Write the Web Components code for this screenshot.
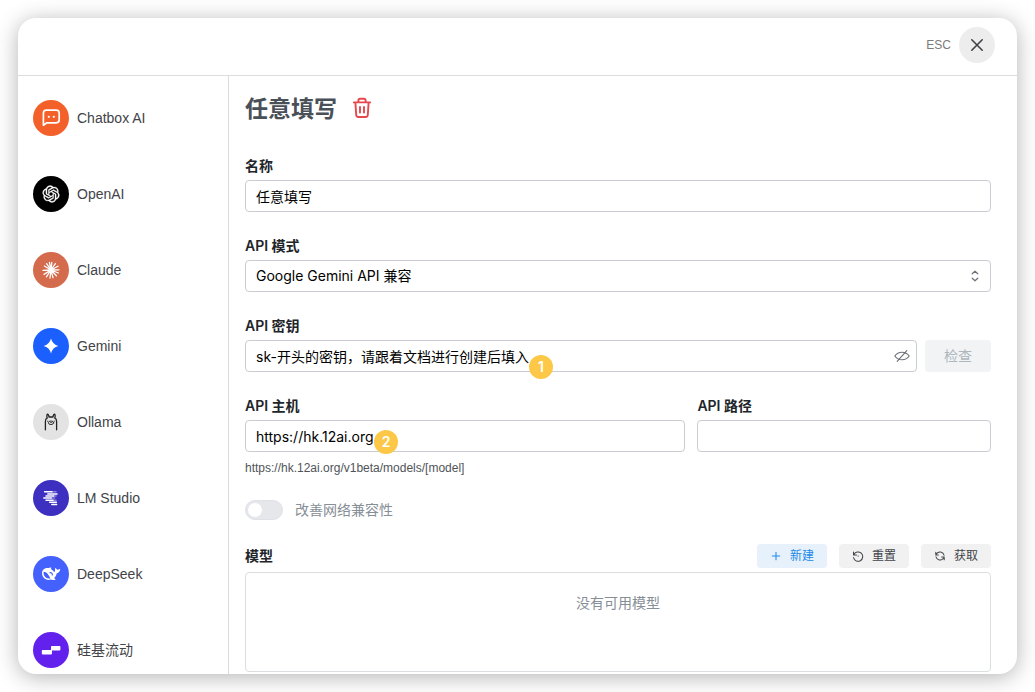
<!DOCTYPE html>
<html lang="zh-CN">
<head>
<meta charset="utf-8">
<meta name="viewport" content="width=device-width, initial-scale=1">
<title>任意填写</title>
<style>
    body {
        margin: 0;
        background: #fff;
        font-family: Inter, "Noto Sans CJK SC", sans-serif;
        font-size: 14px;
        line-height: 20px;
        color: #212529;
    }
</style>
</head>
<body>

<settings-dialog>
    <close-bar slot="header"></close-bar>

    <provider-item slot="providers" icon="chatbox" color="#f4602a">Chatbox AI</provider-item>
    <provider-item slot="providers" icon="openai" color="#000">OpenAI</provider-item>
    <provider-item slot="providers" icon="claude" color="#d46b4d">Claude</provider-item>
    <provider-item slot="providers" icon="gemini" color="#1b5fff">Gemini</provider-item>
    <provider-item slot="providers" icon="ollama" color="#e3e3e3">Ollama</provider-item>
    <provider-item slot="providers" icon="lmstudio" color="#3d2fc0">LM Studio</provider-item>
    <provider-item slot="providers" icon="deepseek" color="#4460fd">DeepSeek</provider-item>
    <provider-item slot="providers" icon="silicon" color="#6321ee">硅基流动</provider-item>

    <provider-title>任意填写</provider-title>

    <field-stack>
        <text-field label="名称" value="任意填写"></text-field>
        <select-field label="API 模式" value="Google Gemini API 兼容"></select-field>
        <text-field label="API 密钥" value="sk-开头的密钥，请跟着文档进行创建后填入" secret>
            <step-badge slot="badge" style="left: 283px; top: 14px">1</step-badge>
            <check-button slot="after">检查</check-button>
        </text-field>
        <field-row>
            <text-field label="API 主机" value="https://hk.12ai.org" style="flex: 3" hint="https://hk.12ai.org/v1beta/models/[model]">
                <step-badge slot="badge" style="left: 128px; top: 9px">2</step-badge>
            </text-field>
            <text-field label="API 路径" value="" style="flex: 2"></text-field>
        </field-row>
    </field-stack>

    <toggle-switch>改善网络兼容性</toggle-switch>

    <model-list label="模型">
        <small-button slot="actions" icon="plus" primary>新建</small-button>
        <small-button slot="actions" icon="reset">重置</small-button>
        <small-button slot="actions" icon="refresh">获取</small-button>
        没有可用模型
    </model-list>
</settings-dialog>

<script>
const logos = {
    chatbox: `
        <path fill="none" stroke="#fff" stroke-width="1.7" stroke-linejoin="round" d="M10.4 25.2V13.2a3 3 0 0 1 3-3h9.8a3 3 0 0 1 3 3v6.6a3 3 0 0 1-3 3h-9.4z"/>
        <circle cx="15.8" cy="16.8" r="1.1" fill="#fff"/>
        <circle cx="20.8" cy="16.8" r="1.1" fill="#fff"/>`,
    openai: `
        <path fill="#fff" stroke="#fff" stroke-width=".5" transform="translate(9.6 9.6) scale(.7)" d="M22.2819 9.8211a5.9847 5.9847 0 0 0-.5157-4.9108 6.0462 6.0462 0 0 0-6.5098-2.9A6.0651 6.0651 0 0 0 4.9807 4.1818a5.9847 5.9847 0 0 0-3.9977 2.9 6.0462 6.0462 0 0 0 .7427 7.0966 5.98 5.98 0 0 0 .511 4.9107 6.051 6.051 0 0 0 6.5146 2.9001A5.9847 5.9847 0 0 0 13.2599 24a6.0557 6.0557 0 0 0 5.7718-4.2058 5.9894 5.9894 0 0 0 3.9977-2.9001 6.0557 6.0557 0 0 0-.7475-7.0729zm-9.022 12.6081a4.4755 4.4755 0 0 1-2.8764-1.0408l.1419-.0804 4.7783-2.7582a.7948.7948 0 0 0 .3927-.6813v-6.7369l2.02 1.1686a.071.071 0 0 1 .038.052v5.5826a4.504 4.504 0 0 1-4.4945 4.4944zm-9.6607-4.1254a4.4708 4.4708 0 0 1-.5346-3.0137l.142.0852 4.783 2.7582a.7712.7712 0 0 0 .7806 0l5.8428-3.3685v2.3324a.0804.0804 0 0 1-.0332.0615L9.74 19.9502a4.4992 4.4992 0 0 1-6.1408-1.6464zM2.3408 7.8956a4.485 4.485 0 0 1 2.3655-1.9728V11.6a.7664.7664 0 0 0 .3879.6765l5.8144 3.3543-2.0201 1.1685a.0757.0757 0 0 1-.071 0l-4.8303-2.7865A4.504 4.504 0 0 1 2.3408 7.872zm16.5963 3.8558L13.1038 8.364 15.1192 7.2a.0757.0757 0 0 1 .071 0l4.8303 2.7913a4.4944 4.4944 0 0 1-.6765 8.1042v-5.6772a.79.79 0 0 0-.407-.667zm2.0107-3.0231l-.142-.0852-4.7735-2.7818a.7759.7759 0 0 0-.7854 0L9.409 9.2297V6.8974a.0662.0662 0 0 1 .0284-.0615l4.8303-2.7866a4.4992 4.4992 0 0 1 6.6802 4.66zM8.3065 12.863l-2.02-1.1638a.0804.0804 0 0 1-.038-.0567V6.0742a4.4992 4.4992 0 0 1 7.3757-3.4537l-.142.0805L8.704 5.459a.7948.7948 0 0 0-.3927.6813zm1.0976-2.3654l2.602-1.4998 2.6069 1.4998v2.9994l-2.5974 1.4997-2.6067-1.4997Z"/>`,
    claude: `
        <path fill="none" stroke="#fff" stroke-width="1.3" stroke-linecap="round" d="M18 18L18.8 10.4M18 18L22.4 11.6M18 18L25 14.2M18 18L26 17.8M18 18L25.4 21M18 18L23.4 23.8M18 18L20 25.6M18 18L17 26M18 18L13.4 24.8M18 18L11 22.4M18 18L10 18.4M18 18L11.4 14M18 18L13.6 11.6M18 18L16.4 10.4"/>
        <circle cx="18" cy="18" r="2.4" fill="#fff"/>`,
    gemini: `
        <path fill="#fff" d="M18 10.6q1.5 5.9 7.4 7.4q-5.9 1.5-7.4 7.4q-1.5-5.9-7.4-7.4q5.9-1.5 7.4-7.4z"/>`,
    ollama: `
        <g fill="none" stroke="#222" stroke-width="1.3" stroke-linecap="round" stroke-linejoin="round">
            <path d="M12.4 25.8V17.4q0-2.6 1.8-3.2q-.8-2.4 0-4q1.6.2 1.8 2.8h4q.2-2.6 1.8-2.8q.8 1.6 0 4q1.800.6 1.800 3.200v8.400"/>
            <ellipse cx="18" cy="18.800" rx="2.600" ry="1.800" stroke-width=".9"/>
            <path d="M17.700 18.600h.6M14.600 17.200h.2M21.200 17.200h.2" stroke-width="1"/>
        </g>`,
    lmstudio: `
        <path fill="none" stroke="#fff" stroke-width="1.5" stroke-linecap="round" d="M11.6 11.8h7.400M14.800 13.900h9.200M13 16h7.600M10.800 18.100h7.400M13 20.200h7M16.600 22.300h6.800M18.800 24.400h4.800"/>
        <path fill="none" stroke="#fff" stroke-opacity=".4" stroke-width="1.5" stroke-linecap="round" d="M19 11.800h4M20.600 16h2.400M18.200 18.100h3.400M20 20.200h3"/>`,
    deepseek: `
        <path fill="#fff" d="M9 16.800c.2-3 2.600-4.800 5.600-4.800c2 0 2.600-.7 3.400-.4c.5.2.1 1-.2 1.400c1.600.8 2.600 2 3.400 3.200c1-.6.8-2.200.9-3.400c.1-.8.6-1 1-.3c.3.7.8 1.200 1.500 1.200c.8 0 1.500-.6 2.100-.7c.5 0 .6.4.4 1c-.5 1.900-1.900 3-3.500 3.600c-.3 2-1.300 3.500-2.600 4.700c.7.4 1.500.6 1.600 1c.1.6-1.500.8-2.700.6c-1-.1-1.600-.5-2.200-.3c-4.700 1.500-8.900-2.300-8.700-6.800z"/>
        <path fill="#4460fd" d="M10.600 15.800c3 0 4.800 3 6 5.200c.5.900 1 1.200.4 1.400c-3.600.8-7-2.400-6.400-6.600z"/>
        <path fill="none" stroke="#4460fd" stroke-width="1.2" stroke-linecap="round" d="M17 16.600c1.500-.2 2.500 1 2.300 2.400"/>`,
    silicon: `
        <path fill="#fff" d="M9.600 18h8.400v-3.200q0-.8.8-.8h7.800q.8 0 .8.8v2.800q0 .8-.8.8h-7.600v3.200q0 .8-.8.8h-8.600q-.8 0-.8-.8v-2.800q0-.8.8-.8z"/>`
}

const icons = {
    plus: '<path d="M8 3v10M3 8h10"/>',
    reset: '<path d="M2 2.600v4h4M2.400 6.400A6.200 6.200 0 1 1 2 10M8 8h.4"/>',
    refresh: '<path d="M13.400 7A5.600 5.600 0 0 0 3.400 5L2.400 6.200M2.400 3v3.600h3.400M2.600 9A5.600 5.600 0 0 0 12.600 11L13.600 9.800M13.600 13V9.400h-3.400"/>'
}

// Small helper so every element attaches its markup the same way
class BaseElement extends HTMLElement {
    connectedCallback() {
        if (this.shadowRoot) {
            return
        }

        const template = document.createElement('template')
        template.innerHTML = this.render()

        this.attachShadow({ mode: 'open' })
            .appendChild(template.content.cloneNode(true))
    }

    attr(name) {
        return this.getAttribute(name) || ''
    }
}

class SettingsDialog extends BaseElement {
    render() {
        return /*html*/`
            <style>
                :host {
                    display: flex;
                    box-sizing: border-box;
                    height: 100vh;
                    padding: 18px;
                }
                .card {
                    flex: 1;
                    display: flex;
                    flex-direction: column;
                    min-width: 0;
                    overflow: hidden;
                    border-radius: 18px;
                    background: #fff;
                    box-shadow: 0 3px 22px rgba(0, 0, 0, .3);
                }
                .body {
                    flex: 1;
                    display: flex;
                    min-height: 0;
                }
                nav, main {
                    overflow: auto;
                    scrollbar-width: none;
                }
                nav {
                    flex: none;
                    box-sizing: border-box;
                    width: 211px;
                    padding-top: 4px;
                    border-right: 1px solid #dcdcdc;
                }
                main {
                    flex: 1;
                    padding: 17px 26px 24px 16px;
                }
            </style>
            <div class="card" role="dialog" aria-label="任意填写">
                <slot name="header"></slot>
                <div class="body">
                    <nav><slot name="providers"></slot></nav>
                    <main><slot></slot></main>
                </div>
            </div>
        `
    }
}

class CloseBar extends BaseElement {
    render() {
        return /*html*/`
            <style>
                :host {
                    display: flex;
                    flex: none;
                    align-items: center;
                    justify-content: flex-end;
                    gap: 8px;
                    padding: 9px 22px 12px;
                    border-bottom: 1px solid #dcdcdc;
                    font-family: "Liberation Sans", sans-serif;
                    font-size: 12px;
                    color: #7b7b7b;
                }
                button {
                    display: grid;
                    place-items: center;
                    width: 36px;
                    height: 36px;
                    padding: 0;
                    border: 0;
                    border-radius: 50%;
                    background: #ededed;
                }
            </style>
            <span>ESC</span>
            <button type="button" aria-label="Close">
                <svg width="14" height="14" viewBox="0 0 14 14" fill="none" stroke="#3f4145" stroke-width="1.6" stroke-linecap="round">
                    <path d="M1.8 1.8l10.400 10.400M12.200 1.800L1.800 12.200"/>
                </svg>
            </button>
        `
    }
}

class ProviderItem extends BaseElement {
    render() {
        return /*html*/`
            <style>
                :host { display: block; }
                a {
                    display: flex;
                    align-items: center;
                    gap: 8px;
                    height: 76px;
                    padding: 0 15px;
                    color: #424449;
                    font-family: "Liberation Sans", "Noto Sans CJK SC", sans-serif;
                    text-decoration: none;
                }
                svg {
                    flex: none;
                    border-radius: 50%;
                    background: ${this.attr('color')};
                }
            </style>
            <a href="#${this.attr('icon')}">
                <svg width="36" height="36" viewBox="0 0 36 36" aria-hidden="true">${logos[this.attr('icon')]}</svg>
                <slot></slot>
            </a>
        `
    }
}

class ProviderTitle extends BaseElement {
    render() {
        return /*html*/`
            <style>
                :host {
                    display: flex;
                    align-items: center;
                    gap: 15px;
                    margin-bottom: 31px;
                }
                h1 {
                    margin: 0;
                    font-size: 23px;
                    line-height: 32px;
                    color: #495057;
                }
                button {
                    display: flex;
                    padding: 0 0 2px;
                    border: 0;
                    background: none;
                }
            </style>
            <h1><slot></slot></h1>
            <button type="button" aria-label="Delete">
                <svg width="20" height="22" viewBox="0 0 20 22" fill="none" stroke="#e5484d" stroke-width="1.9" stroke-linecap="round" stroke-linejoin="round">
                    <path d="M1.800 5.400h16.400M6.400 5.200V3.400Q6.400 1.800 8 1.800h4q1.600 0 1.600 1.600v1.800M3.400 5.600l.8 12.400q.2 2 2.200 2h7.200q2 0 2.200-2l.8-12.400M8 10v5.600M12 10v5.600"/>
                </svg>
            </button>
        `
    }
}

class FieldStack extends BaseElement {
    render() {
        return /*html*/`
            <style>
                :host {
                    display: flex;
                    flex-direction: column;
                    gap: 24px;
                }
            </style>
            <slot></slot>
        `
    }
}

class FieldRow extends BaseElement {
    render() {
        return /*html*/`
            <style>
                :host {
                    display: flex;
                    align-items: flex-start;
                    gap: 12px;
                }
            </style>
            <slot></slot>
        `
    }
}

// Shared by the text and the select field
const fieldStyles = /*css*/`
    :host {
        display: block;
        min-width: 0;
    }
    label {
        display: block;
        margin-bottom: 4px;
        font-weight: 600;
    }
    .line {
        display: flex;
        gap: 8px;
    }
    .box {
        position: relative;
        flex: 1;
        display: flex;
        align-items: center;
        box-sizing: border-box;
        height: 32px;
        border: 1px solid #c9cdd1;
        border-radius: 4px;
        color: #6c7076;
    }
    input, select {
        flex: 1;
        min-width: 0;
        height: 100%;
        padding: 0 10px;
        border: 0;
        outline: 0;
        appearance: none;
        background: none;
        font: inherit;
        color: #000;
    }
`

class TextField extends BaseElement {
    render() {
        const eye = /*html*/`
            <button type="button" aria-label="Toggle visibility">
                <svg width="16" height="14" viewBox="0 0 16 14" fill="none" stroke="currentColor" stroke-width="1.1" stroke-linecap="round">
                    <path d="M.8 7Q3.400 3.200 8 3.200T15.200 7Q12.600 10.800 8 10.800T.8 7zM12.800 1.600L3.200 12.400"/>
                </svg>
            </button>
        `
        const hint = `<div class="hint">${this.attr('hint')}</div>`

        return /*html*/`
            <style>
                ${fieldStyles}
                button {
                    display: flex;
                    padding: 0 6px;
                    border: 0;
                    background: none;
                    color: inherit;
                }
                .hint {
                    margin-top: 6px;
                    font-family: "Liberation Sans", sans-serif;
                    font-size: 12px;
                    color: #505459;
                }
            </style>
            <label for="field">${this.attr('label')}</label>
            <div class="line">
                <div class="box">
                    <input id="field" type="text" value="${this.attr('value')}">
                    ${this.hasAttribute('secret') ? eye : ''}
                    <slot name="badge"></slot>
                </div>
                <slot name="after"></slot>
            </div>
            ${this.hasAttribute('hint') ? hint : ''}
        `
    }
}

class SelectField extends BaseElement {
    render() {
        return /*html*/`
            <style>
                ${fieldStyles}
                svg { margin-right: 10px; }
            </style>
            <label for="field">${this.attr('label')}</label>
            <div class="box">
                <select id="field"><option>${this.attr('value')}</option></select>
                <svg width="10" height="12" viewBox="0 0 10 12" fill="none" stroke="currentColor" stroke-width="1.2" stroke-linecap="round" stroke-linejoin="round">
                    <path d="M2.200 3.800L5 1.200l2.800 2.600M2.200 8.200L5 10.800l2.800-2.600"/>
                </svg>
            </div>
        `
    }
}

class StepBadge extends BaseElement {
    render() {
        return /*html*/`
            <style>
                :host {
                    position: absolute;
                    width: 24px;
                    border-radius: 50%;
                    background: #fdc748;
                    color: #fff;
                    font-weight: 600;
                    line-height: 24px;
                    text-align: center;
                }
            </style>
            <slot></slot>
        `
    }
}

class CheckButton extends BaseElement {
    render() {
        return /*html*/`
            <style>
                :host { display: flex; }
                button {
                    padding: 0 19px;
                    border: 0;
                    border-radius: 4px;
                    background: #f1f3f5;
                    color: #adb5bd;
                    font: inherit;
                }
            </style>
            <button type="button" disabled><slot></slot></button>
        `
    }
}

class ToggleSwitch extends BaseElement {
    render() {
        return /*html*/`
            <style>
                :host {
                    display: flex;
                    align-items: center;
                    gap: 12px;
                    margin: 22px 0 24px;
                    color: #868e96;
                }
                input {
                    flex: none;
                    box-sizing: border-box;
                    display: flex;
                    align-items: center;
                    width: 38px;
                    height: 20px;
                    margin: 0;
                    padding: 0 2px;
                    border: 1px solid #dee2e6;
                    border-radius: 10px;
                    appearance: none;
                    background: #e5e7ea;
                }
                input::before {
                    content: "";
                    width: 14px;
                    height: 14px;
                    border-radius: 50%;
                    background: #fff;
                }
                input:checked { justify-content: flex-end; }
            </style>
            <input id="toggle" type="checkbox" role="switch">
            <label for="toggle"><slot></slot></label>
        `
    }
}

class SmallButton extends BaseElement {
    render() {
        return /*html*/`
            <style>
                :host {
                    display: flex;
                    --bg: #f1f1f2;
                    --fg: #424449;
                }
                :host([primary]) {
                    --bg: #e6f1fc;
                    --fg: #228be6;
                }
                button {
                    display: flex;
                    align-items: center;
                    gap: 8px;
                    height: 24px;
                    padding: 0 13px;
                    border: 0;
                    border-radius: 4px;
                    background: var(--bg);
                    color: var(--fg);
                    font: inherit;
                    font-size: 12px;
                }
            </style>
            <button type="button">
                <svg width="12" height="12" viewBox="0 0 16 16" fill="none" stroke="currentColor" stroke-width="1.4" stroke-linecap="round" stroke-linejoin="round">${icons[this.attr('icon')]}</svg>
                <slot></slot>
            </button>
        `
    }
}

class ModelList extends BaseElement {
    render() {
        return /*html*/`
            <style>
                :host { display: block; }
                header {
                    display: flex;
                    align-items: center;
                    gap: 12px;
                    margin-bottom: 4px;
                }
                h2 {
                    flex: 1;
                    margin: 0;
                    font-size: 14px;
                    font-weight: 600;
                    line-height: 20px;
                }
                .list {
                    box-sizing: border-box;
                    min-height: 100px;
                    padding: 20px;
                    border: 1px solid #dbdee1;
                    border-radius: 4px;
                    color: #868e96;
                    text-align: center;
                }
            </style>
            <header>
                <h2>${this.attr('label')}</h2>
                <slot name="actions"></slot>
            </header>
            <div class="list"><slot></slot></div>
        `
    }
}

customElements.define('settings-dialog', SettingsDialog)
customElements.define('close-bar', CloseBar)
customElements.define('provider-item', ProviderItem)
customElements.define('provider-title', ProviderTitle)
customElements.define('field-stack', FieldStack)
customElements.define('field-row', FieldRow)
customElements.define('text-field', TextField)
customElements.define('select-field', SelectField)
customElements.define('step-badge', StepBadge)
customElements.define('check-button', CheckButton)
customElements.define('toggle-switch', ToggleSwitch)
customElements.define('small-button', SmallButton)
customElements.define('model-list', ModelList)
</script>
</body>
</html>
